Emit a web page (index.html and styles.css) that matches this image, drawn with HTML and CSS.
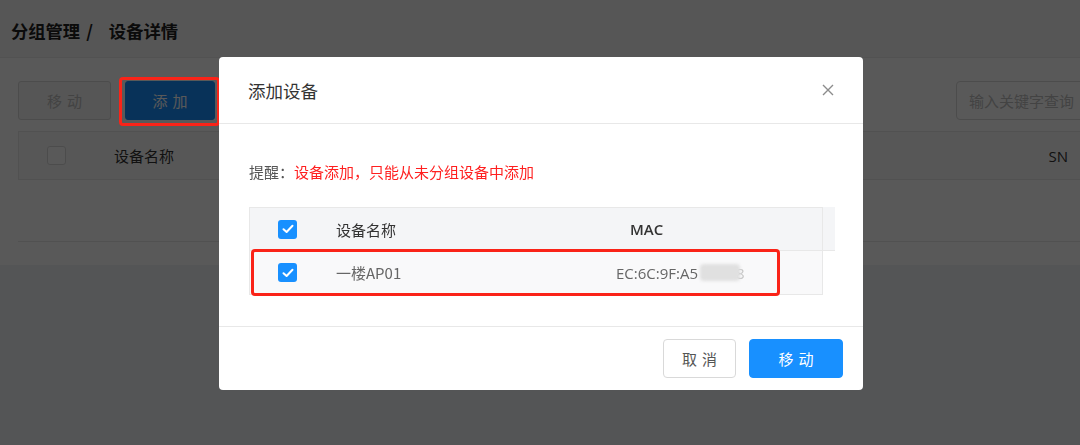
FILE: index.html
```html
<!DOCTYPE html>
<html lang="zh">
<head>
<meta charset="utf-8">
<title>设备详情</title>
<link rel="stylesheet" href="styles.css">
</head>
<body>
<div class="page">
  <div class="topbar">
    <span class="crumb">分组管理</span><span class="sep">/</span><span class="crumb">设备详情</span>
  </div>
  <div class="panel">
    <div class="toolbar">
      <div class="btns">
        <button class="btn btn-disabled">移动</button>
        <button class="btn btn-primary">添加</button>
      </div>
      <div class="search">输入关键字查询</div>
    </div>
    <div class="bg-table">
      <div class="bg-head">
        <span class="bg-check"></span>
        <span class="bg-name">设备名称</span>
        <span class="bg-sn">SN</span>
      </div>
      <div class="bg-empty"></div>
    </div>
  </div>
</div>

<div class="mask"></div>
<div class="mark mark-add"></div>

<div class="modal">
  <div class="modal-header">
    <span class="modal-title">添加设备</span>
    <svg class="close" width="12" height="12" viewBox="0 0 12 12"><path d="M1 1L11 11M11 1L1 11" stroke="#8c8c8c" stroke-width="1.4" fill="none"/></svg>
  </div>
  <div class="modal-body">
    <p class="hint"><span class="hint-label">提醒：</span><span class="hint-text">设备添加，只能从未分组设备中添加</span></p>
    <div class="table-wrap">
      <div class="table">
        <div class="row row-head">
          <span class="cell-check"><span class="cb"><svg width="12" height="10" viewBox="0 0 12 10"><path d="M1.5 5.2L4.6 8L10.5 1.8" stroke="#fff" stroke-width="2" fill="none" stroke-linecap="round" stroke-linejoin="round"/></svg></span></span>
          <span class="cell-name">设备名称</span>
          <span class="cell-mac head-mac">MAC</span>
        </div>
        <div class="row row-body">
          <span class="cell-check"><span class="cb"><svg width="12" height="10" viewBox="0 0 12 10"><path d="M1.5 5.2L4.6 8L10.5 1.8" stroke="#fff" stroke-width="2" fill="none" stroke-linecap="round" stroke-linejoin="round"/></svg></span></span>
          <span class="cell-name body-text">一楼AP01</span>
          <span class="cell-mac body-mac">EC:6C:9F:A5<span class="blur"></span><span class="tail">8</span></span>
        </div>
      </div>
      <div class="gutter"></div>
    </div>
    <div class="mark mark-row"></div>
  </div>
  <div class="modal-footer">
    <button class="mbtn mbtn-cancel">取消</button>
    <button class="mbtn mbtn-ok">移动</button>
  </div>
</div>
</body>
</html>
```

FILE: styles.css
```css
* { box-sizing: border-box; }
html, body {
  margin: 0;
  padding: 0;
  width: 1080px;
  height: 445px;
  overflow: hidden;
  background: #f0f2f5;
  font-family: "Open Sans", "Noto Sans CJK SC", sans-serif;
}
.page { width: 1080px; }
.topbar {
  height: 58px;
  background: #f7f7f7;
  border-bottom: 1px solid #ececec;
  display: flex;
  align-items: center;
  padding-left: 11px;
  padding-top: 4px;
  font-family: "Noto Sans CJK SC", sans-serif;
  font-size: 17.3px;
  font-weight: 700;
  color: #222;
}
.sep { margin: 0 16px 0 6px; }
.panel {
  background: #fff;
  padding: 23px 0 23px 18px;
  overflow: hidden;
}
.toolbar {
  display: flex;
  justify-content: space-between;
  align-items: center;
}
.btns { display: flex; gap: 14px; }
.btn {
  height: 39px;
  border-radius: 3px;
  font-family: "Noto Sans CJK SC", sans-serif;
  font-size: 15px;
  letter-spacing: 5px;
  text-indent: 5px;
  padding: 0;
}
.btn-disabled {
  width: 93px;
  border: 1px solid #d9d9d9;
  background: #f5f5f5;
  color: #bfbfbf;
}
.btn-primary {
  width: 90px;
  border: 1px solid #1890ff;
  background: #1890ff;
  color: #fff;
}
.search {
  width: 140px;
  height: 39px;
  margin-right: -16px;
  border: 1px solid #d9d9d9;
  border-radius: 4px;
  padding: 0 12px;
  display: flex;
  align-items: center;
  font-family: "Noto Sans CJK SC", sans-serif;
  font-size: 15px;
  color: #bfbfbf;
}
.bg-table {
  margin-top: 11px;
  margin-right: -10px;
}
.bg-head {
  height: 49px;
  border: 1px solid #e8e8e8;
  background: #fafafa;
  display: flex;
  align-items: center;
  font-family: "Noto Sans CJK SC", sans-serif;
  font-size: 15px;
  color: #333;
}
.bg-check {
  width: 19px;
  height: 19px;
  border: 1px solid #d9d9d9;
  border-radius: 3px;
  background: #fff;
  margin-left: 28px;
}
.bg-name { margin-left: 48px; }
.bg-sn { margin-left: auto; margin-right: 21px; font-family: "Open Sans", sans-serif; }
.bg-empty {
  height: 62px;
  border-bottom: 1px solid #e8e8e8;
}

.mask {
  position: fixed;
  inset: 0;
  background: rgba(0, 0, 0, 0.65);
}
.mark {
  position: absolute;
  border: 3px solid #fa2318;
  border-radius: 4px;
}
.mark-add {
  left: 119px;
  top: 77px;
  width: 101px;
  height: 49px;
}

.modal {
  position: absolute;
  left: 219px;
  top: 57px;
  width: 644px;
  height: 333px;
  background: #fff;
  border-radius: 4px;
  display: flex;
  flex-direction: column;
  font-family: "Noto Sans CJK SC", sans-serif;
}
.modal-header {
  height: 67px;
  border-bottom: 1px solid #e8e8e8;
  display: flex;
  align-items: center;
  justify-content: space-between;
  padding: 0 29px;
}
.modal-title {
  font-size: 17.5px;
  color: #333;
}
.modal-body {
  position: relative;
  flex: 1;
  padding: 37px 28px 0 30px;
}
.hint {
  margin: 0;
  font-family: "Noto Sans CJK SC", sans-serif;
  font-size: 15px;
  line-height: 22px;
}
.hint-label { color: #555; }
.hint-text { color: #ff1f1f; }
.table-wrap {
  margin-top: 24px;
  display: flex;
  align-items: flex-start;
}
.table {
  width: 574px;
  border: 1px solid #e8e8e8;
  border-bottom: none;
}
.gutter {
  width: 12px;
  height: 44px;
  background: #f4f5f7;
  border-bottom: 1px solid #e8e8e8;
}
.row {
  height: 44px;
  display: flex;
  align-items: center;
  border-bottom: 1px solid #e8e8e8;
  font-size: 15px;
}
.row-head { height: 43px; background: #f4f5f7; color: #333; }
.row-body { background: #f9f9fa; }
.cell-check { width: 86px; padding-left: 28px; display: flex; }
.cb {
  width: 19px;
  height: 19px;
  border-radius: 3px;
  background: #1890ff;
  display: flex;
  align-items: center;
  justify-content: center;
}
.cell-name { width: 282px; }
.body-text { color: #666; }
.head-mac {
  padding-left: 12px;
  font-family: "Open Sans", sans-serif;
  font-weight: 600;
  color: #333;
}
.body-mac {
  font-family: "Open Sans", sans-serif;
  color: #666;
  display: flex;
  align-items: center;
  margin-left: -2px;
}
.blur {
  display: inline-block;
  width: 40px;
  height: 17px;
  background: #e0e0e0;
  border-radius: 4px;
  filter: blur(1.5px);
  margin-left: 2px;
}
.tail {
  color: #c4c4c4;
  margin-left: -4px;
}
.mark-row {
  left: 32px;
  top: 125px;
  width: 529px;
  height: 47px;
}
.modal-footer {
  height: 64px;
  border-top: 1px solid #e8e8e8;
  display: flex;
  justify-content: flex-end;
  align-items: center;
  gap: 13px;
  padding: 0 20px 0 0;
}
.mbtn {
  height: 39px;
  border-radius: 4px;
  font-family: "Noto Sans CJK SC", sans-serif;
  font-size: 15px;
  letter-spacing: 5px;
  text-indent: 5px;
  padding: 0;
}
.mbtn-cancel {
  width: 73px;
  background: #fff;
  border: 1px solid #d9d9d9;
  color: #555;
}
.mbtn-ok {
  width: 94px;
  background: #1890ff;
  border: 1px solid #1890ff;
  color: #fff;
}
```
